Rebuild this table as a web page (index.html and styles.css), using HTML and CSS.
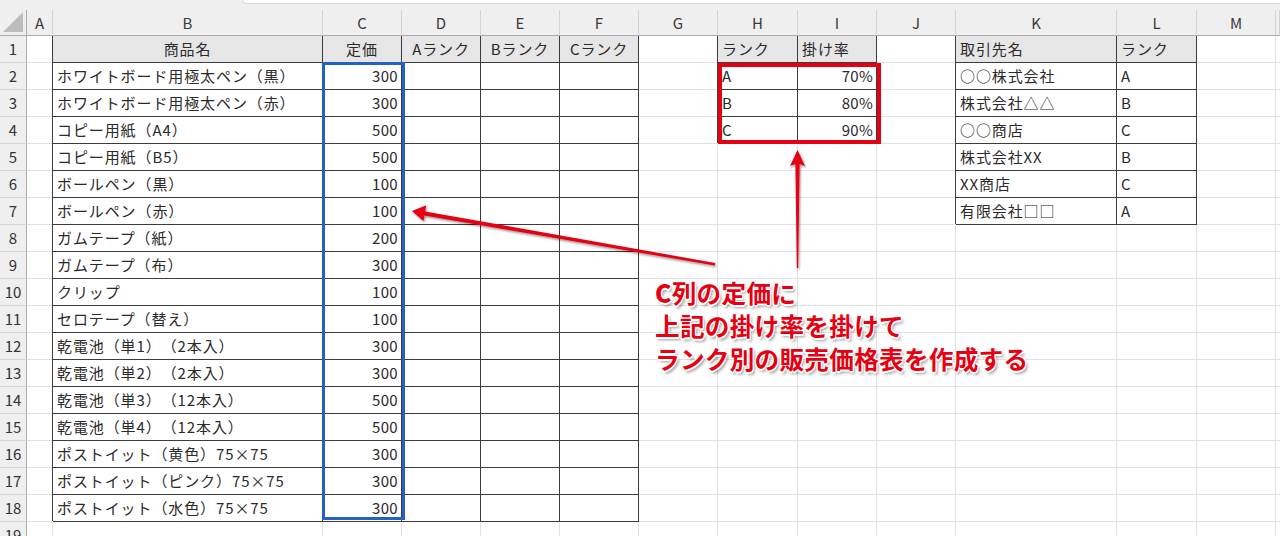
FILE: index.html
```html
<!DOCTYPE html>
<html lang="ja">
<head>
<meta charset="utf-8">
<title>Sheet</title>
<link rel="stylesheet" href="styles.css">
</head>
<body>
<div class="sheet">
  <div class="topstrip"><div class="topgap"></div><div class="formula"></div></div>
  <div class="row colhdr">
    <span class="corner"><svg width="20" height="20" viewBox="0 0 20 20"><polygon points="20,0 20,20 0,20" fill="#bcbcbc"/></svg></span>
    <span>A</span><span>B</span><span>C</span><span>D</span><span>E</span><span>F</span><span>G</span><span>H</span><span>I</span><span>J</span><span>K</span><span>L</span><span>M</span><span></span>
  </div>
  <div class="row first">
    <span class="rh">1</span><span></span>
    <span class="t h c">商品名</span><span class="t h c">定価</span><span class="t h c">Aランク</span><span class="t h c">Bランク</span><span class="t h c">Cランク</span>
    <span></span><span class="t h">ランク</span><span class="t h">掛け率</span><span></span><span class="t h">取引先名</span><span class="t h">ランク</span><span></span><span></span>
  </div>
  <div class="row">
    <span class="rh">2</span><span></span>
    <span class="t">ホワイトボード用極太ペン（黒）</span><span class="t r">300</span><span class="t"></span><span class="t"></span><span class="t"></span>
    <span></span><span class="t">A</span><span class="t r">70%</span><span></span><span class="t">○○株式会社</span><span class="t">A</span><span></span><span></span>
  </div>
  <div class="row">
    <span class="rh">3</span><span></span>
    <span class="t">ホワイトボード用極太ペン（赤）</span><span class="t r">300</span><span class="t"></span><span class="t"></span><span class="t"></span>
    <span></span><span class="t">B</span><span class="t r">80%</span><span></span><span class="t">株式会社△△</span><span class="t">B</span><span></span><span></span>
  </div>
  <div class="row">
    <span class="rh">4</span><span></span>
    <span class="t">コピー用紙（A4）</span><span class="t r">500</span><span class="t"></span><span class="t"></span><span class="t"></span>
    <span></span><span class="t">C</span><span class="t r">90%</span><span></span><span class="t">○○商店</span><span class="t">C</span><span></span><span></span>
  </div>
  <div class="row">
    <span class="rh">5</span><span></span>
    <span class="t">コピー用紙（B5）</span><span class="t r">500</span><span class="t"></span><span class="t"></span><span class="t"></span>
    <span></span><span></span><span></span><span></span><span class="t">株式会社XX</span><span class="t">B</span><span></span><span></span>
  </div>
  <div class="row">
    <span class="rh">6</span><span></span>
    <span class="t">ボールペン（黒）</span><span class="t r">100</span><span class="t"></span><span class="t"></span><span class="t"></span>
    <span></span><span></span><span></span><span></span><span class="t">XX商店</span><span class="t">C</span><span></span><span></span>
  </div>
  <div class="row">
    <span class="rh">7</span><span></span>
    <span class="t">ボールペン（赤）</span><span class="t r">100</span><span class="t"></span><span class="t"></span><span class="t"></span>
    <span></span><span></span><span></span><span></span><span class="t">有限会社□□</span><span class="t">A</span><span></span><span></span>
  </div>
  <div class="row">
    <span class="rh">8</span><span></span>
    <span class="t">ガムテープ（紙）</span><span class="t r">200</span><span class="t"></span><span class="t"></span><span class="t"></span>
    <span></span><span></span><span></span><span></span><span></span><span></span><span></span><span></span>
  </div>
  <div class="row">
    <span class="rh">9</span><span></span>
    <span class="t">ガムテープ（布）</span><span class="t r">300</span><span class="t"></span><span class="t"></span><span class="t"></span>
    <span></span><span></span><span></span><span></span><span></span><span></span><span></span><span></span>
  </div>
  <div class="row">
    <span class="rh">10</span><span></span>
    <span class="t">クリップ</span><span class="t r">100</span><span class="t"></span><span class="t"></span><span class="t"></span>
    <span></span><span></span><span></span><span></span><span></span><span></span><span></span><span></span>
  </div>
  <div class="row">
    <span class="rh">11</span><span></span>
    <span class="t">セロテープ（替え）</span><span class="t r">100</span><span class="t"></span><span class="t"></span><span class="t"></span>
    <span></span><span></span><span></span><span></span><span></span><span></span><span></span><span></span>
  </div>
  <div class="row">
    <span class="rh">12</span><span></span>
    <span class="t">乾電池（単1）（2本入）</span><span class="t r">300</span><span class="t"></span><span class="t"></span><span class="t"></span>
    <span></span><span></span><span></span><span></span><span></span><span></span><span></span><span></span>
  </div>
  <div class="row">
    <span class="rh">13</span><span></span>
    <span class="t">乾電池（単2）（2本入）</span><span class="t r">300</span><span class="t"></span><span class="t"></span><span class="t"></span>
    <span></span><span></span><span></span><span></span><span></span><span></span><span></span><span></span>
  </div>
  <div class="row">
    <span class="rh">14</span><span></span>
    <span class="t">乾電池（単3）（12本入）</span><span class="t r">500</span><span class="t"></span><span class="t"></span><span class="t"></span>
    <span></span><span></span><span></span><span></span><span></span><span></span><span></span><span></span>
  </div>
  <div class="row">
    <span class="rh">15</span><span></span>
    <span class="t">乾電池（単4）（12本入）</span><span class="t r">500</span><span class="t"></span><span class="t"></span><span class="t"></span>
    <span></span><span></span><span></span><span></span><span></span><span></span><span></span><span></span>
  </div>
  <div class="row">
    <span class="rh">16</span><span></span>
    <span class="t">ポストイット（黄色）75×75</span><span class="t r">300</span><span class="t"></span><span class="t"></span><span class="t"></span>
    <span></span><span></span><span></span><span></span><span></span><span></span><span></span><span></span>
  </div>
  <div class="row">
    <span class="rh">17</span><span></span>
    <span class="t">ポストイット（ピンク）75×75</span><span class="t r">300</span><span class="t"></span><span class="t"></span><span class="t"></span>
    <span></span><span></span><span></span><span></span><span></span><span></span><span></span><span></span>
  </div>
  <div class="row">
    <span class="rh">18</span><span></span>
    <span class="t">ポストイット（水色）75×75</span><span class="t r">300</span><span class="t"></span><span class="t"></span><span class="t"></span>
    <span></span><span></span><span></span><span></span><span></span><span></span><span></span><span></span>
  </div>
  <div class="row">
    <span class="rh">19</span><span></span><span></span><span></span><span></span><span></span><span></span>
    <span></span><span></span><span></span><span></span><span></span><span></span><span></span><span></span>
  </div>

  <div class="sel-blue"></div>
  <div class="sel-red"></div>

  <svg class="arrows" width="1280" height="536" viewBox="0 0 1280 536">
    <defs>
      <filter id="sh" x="-10%" y="-10%" width="120%" height="130%">
        <feDropShadow dx="1" dy="1.5" stdDeviation="0.8" flood-color="#000" flood-opacity="0.45"/>
      </filter>
    </defs>
    <g fill="#e60012" filter="url(#sh)">
      <polygon points="797.5,150 805,166 799.6,164 798.2,268 796.8,268 795.4,164 790,166"/>
      <polygon points="412,211 426.2,205.3 425.1,211.4 715.2,263 714.8,265.6 424.5,215.6 423.4,221.1"/>
    </g>
  </svg>

  <div class="note">
    <p><span class="big">C</span>列の定価に</p>
    <p>上記の掛け率を掛けて</p>
    <p>ランク別の販売価格表を作成する</p>
  </div>
</div>
</body>
</html>
```

FILE: styles.css
```css
html, body {
  margin: 0;
  padding: 0;
  background: #ffffff;
}

.sheet {
  position: relative;
  width: 1280px;
  height: 536px;
  overflow: hidden;
  font-family: "Noto Sans CJK JP", "Noto Sans", sans-serif;
  font-size: 15px;
  color: #2a2a2a;
  background: #ffffff;
  text-spacing-trim: space-all;
}

.topstrip {
  display: flex;
  height: 10px;
  background: #efefef;
}

.topgap {
  width: 242px;
}

.formula {
  flex: 1;
  height: 3px;
  background: #ffffff;
  border-left: 1px solid #d6d6d6;
  border-bottom: 1px solid #d6d6d6;
  border-bottom-left-radius: 4px;
}

.row {
  display: grid;
  grid-template-columns: 27px 26px 270px 79px 79px 79px 79px 79px 80px 79px 79px 161px 80px 79px 4px;
  height: 27px;
}

.row > * {
  box-sizing: border-box;
  border-right: 1px solid #e1e1e1;
  border-bottom: 1px solid #e1e1e1;
  padding: 0 4px;
  line-height: 26px;
  white-space: nowrap;
  overflow: hidden;
  letter-spacing: 0.9px;
}

.colhdr {
  height: 26px;
  background: #efefef;
}

.colhdr > * {
  border-right: 1px solid #d2d2d2;
  border-bottom: 1px solid #acacac;
  text-align: center;
  color: #3a3a3a;
  line-height: 25px;
  font-size: 15px;
  padding: 0;
  letter-spacing: 0;
}

.colhdr > .corner {
  border-right-color: #acacac;
  display: flex;
  align-items: flex-end;
  justify-content: flex-end;
  padding: 0 3px 3px 0;
}

.corner svg {
  display: block;
}

.row > .rh {
  background: #efefef;
  border-right: 1px solid #acacac;
  border-bottom: 1px solid #d6d6d6;
  text-align: center;
  color: #333333;
  padding: 0;
  letter-spacing: 0;
}

.row > .t {
  border-right-color: #3c3c3c;
  border-bottom-color: #3c3c3c;
  box-shadow: -1px -1px 0 #3c3c3c;
}

.first > .t {
  box-shadow: -1px 0 0 #3c3c3c;
}

.row > .h {
  background: #e6e6e6;
}

.row > .c {
  text-align: center;
}

.row > .r {
  text-align: right;
  letter-spacing: 0.3px;
  padding-right: 3px;
}

.sel-blue {
  position: absolute;
  left: 322px;
  top: 62px;
  width: 83px;
  height: 458px;
  box-sizing: border-box;
  border: 3px solid #2162c4;
}

.sel-red {
  position: absolute;
  left: 718px;
  top: 63px;
  width: 163px;
  height: 81px;
  box-sizing: border-box;
  border: 4px solid #e60012;
}

.arrows {
  position: absolute;
  left: 0;
  top: 0;
  pointer-events: none;
}

.note {
  position: absolute;
  left: 655px;
  top: 276px;
  font-family: "Noto Sans CJK JP", sans-serif;
  font-weight: 700;
  font-size: 24.6px;
  line-height: 33px;
  color: #e60012;
  letter-spacing: 0.3px;
  text-shadow: -1px -1px 0 #fff, 1px -1px 0 #fff, -1px 1px 0 #fff, 1px 1px 0 #fff, 0 2px 0 #fff, 2px 3px 3px rgba(0, 0, 0, 0.4);
}

.note p {
  margin: 0;
  white-space: nowrap;
}

.big {
  font-weight: 900;
}
```
